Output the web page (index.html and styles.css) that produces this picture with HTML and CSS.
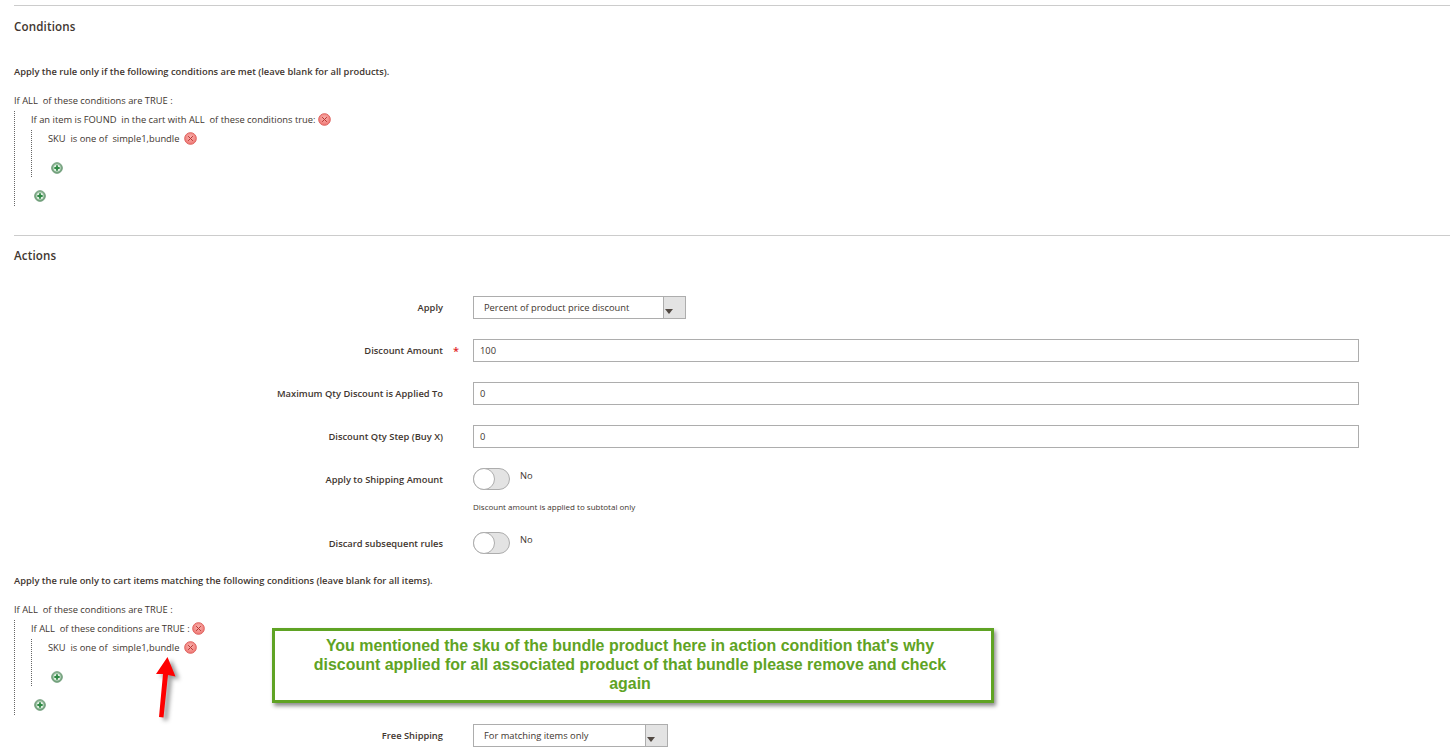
FILE: index.html
```html
<!DOCTYPE html>
<html lang="en">
<head>
<meta charset="utf-8">
<title>Cart Price Rule</title>
<link rel="stylesheet" href="styles.css">
</head>
<body>
<svg class="defs" width="0" height="0" aria-hidden="true">
  <defs>
    <radialGradient id="redg" cx="50%" cy="40%" r="60%"><stop offset="0" stop-color="#f9b4b0"/><stop offset="1" stop-color="#ef7672"/></radialGradient>
    <radialGradient id="greeng" cx="50%" cy="40%" r="60%"><stop offset="0" stop-color="#a9c9ae"/><stop offset="1" stop-color="#6d9f78"/></radialGradient>
    <symbol id="rm" viewBox="0 0 13 13"><circle cx="6.5" cy="6.5" r="5.8" fill="url(#redg)" stroke="#dd5f5b"/><path d="M4.2 4.2l4.600 4.600M8.800 4.200l-4.600 4.600" stroke="#b5322e" stroke-width="1" fill="none"/></symbol>
    <symbol id="add" viewBox="0 0 13 13"><circle cx="6.5" cy="6.5" r="5.8" fill="url(#greeng)" stroke="#6f9b78"/><circle cx="6.5" cy="6.5" r="3.8" fill="#dfeee0"/><path d="M6.5 3.6v5.8M3.6 6.5h5.8" stroke="#2f8a45" stroke-width="2" fill="none"/></symbol>
  </defs>
</svg>

<section class="section section-conditions">
  <h2 class="section-title">Conditions</h2>
  <p class="rule-intro">Apply the rule only if the following conditions are met (leave blank for all products).</p>
  <div class="tree">
    <div class="tree-line">If ALL&nbsp; of these conditions are TRUE :</div>
    <div class="branch">
      <div class="tree-line">If an item is FOUND&nbsp; in the cart with ALL&nbsp; of these conditions true: <svg class="ico ico-tight"><use href="#rm"/></svg></div>
      <div class="branch branch-inner">
        <div class="tree-line">SKU&nbsp; is one of&nbsp; simple1,bundle <svg class="ico"><use href="#rm"/></svg></div>
        <svg class="ico add add-inner"><use href="#add"/></svg>
      </div>
      <svg class="ico add add-outer"><use href="#add"/></svg>
    </div>
  </div>
</section>

<section class="section section-actions">
  <h2 class="section-title">Actions</h2>
  <div class="form">
    <div class="row row-select">
      <label class="row-label">Apply</label>
      <div class="select select-wide"><span class="select-text">Percent of product price discount</span><span class="select-btn"><i class="caret"></i></span></div>
    </div>
    <div class="row">
      <label class="row-label required">Discount Amount</label>
      <div class="input">100</div>
    </div>
    <div class="row">
      <label class="row-label">Maximum Qty Discount is Applied To</label>
      <div class="input">0</div>
    </div>
    <div class="row">
      <label class="row-label">Discount Qty Step (Buy X)</label>
      <div class="input">0</div>
    </div>
    <div class="row row-toggle">
      <label class="row-label">Apply to Shipping Amount</label>
      <div>
        <div class="toggle-wrap"><span class="toggle"><i class="knob"></i></span><span class="toggle-text">No</span></div>
        <div class="note">Discount amount is applied to subtotal only</div>
      </div>
    </div>
    <div class="row row-toggle row-discard">
      <label class="row-label">Discard subsequent rules</label>
      <div class="toggle-wrap"><span class="toggle"><i class="knob"></i></span><span class="toggle-text">No</span></div>
    </div>
  </div>
  <p class="rule-intro rule-intro-action">Apply the rule only to cart items matching the following conditions (leave blank for all items).</p>
  <div class="tree">
    <div class="tree-line">If ALL&nbsp; of these conditions are TRUE :</div>
    <div class="branch">
      <div class="tree-line">If ALL&nbsp; of these conditions are TRUE : <svg class="ico ico-tight"><use href="#rm"/></svg></div>
      <div class="branch branch-inner">
        <div class="tree-line">SKU&nbsp; is one of&nbsp; simple1,bundle <svg class="ico"><use href="#rm"/></svg></div>
        <svg class="ico add add-inner"><use href="#add"/></svg>
      </div>
      <svg class="ico add add-outer"><use href="#add"/></svg>
    </div>
  </div>
  <div class="row row-select row-free">
    <label class="row-label">Free Shipping</label>
    <div class="select select-narrow"><span class="select-text">For matching items only</span><span class="select-btn"><i class="caret"></i></span></div>
  </div>
</section>

<div class="callout">You mentioned the sku of the bundle product here in action condition that's why discount applied for all associated product of that bundle please remove and check again</div>
<svg class="arrow" width="40" height="70" viewBox="0 0 40 70" aria-hidden="true"><path d="M17.500 1L25.500 20.500L18 19L13.500 61.500L9 61L13 18L6 18Z" fill="#fe0000"/></svg>
</body>
</html>
```
FILE: styles.css
```css
* { box-sizing: border-box; }
html, body { margin: 0; padding: 0; }
body {
  width: 1450px;
  height: 754px;
  overflow: hidden;
  position: relative;
  background: #fff;
  font-family: "Open Sans", "Noto Sans", sans-serif;
  font-size: 9.35px;
  line-height: 14px;
  color: #41362f;
}
.defs { position: absolute; }
.section { border-top: 1px solid #cccccc; margin-left: 14px; }
.section-conditions { margin-top: 5px; height: 230px; }
.section-title {
  margin: 13px 0 0;
  font-size: 11.6px;
  line-height: 15px;
  font-weight: 600;
  letter-spacing: .15px;
  color: #41362f;
}
.section-actions .section-title { margin-top: 12px; }
.rule-intro { margin: 31px 0 0; font-weight: 600; line-height: 14px; }
.tree { margin-top: 15px; }
.tree-line { height: 19px; line-height: 14px; white-space: nowrap; }
.branch {
  border-left: 1px dotted #666;
  margin-top: -2px;
  padding-top: 2px;
  padding-left: 16px;
  height: 95px;
  position: relative;
}
.branch-inner { height: 47px; }
.ico { width: 13px; height: 13px; vertical-align: -3px; margin-left: 2px; }
.ico-tight { margin-left: 0; }
.add { display: block; margin: 0; position: absolute; left: 19px; width: 12px; height: 12px; }
.add-inner { top: 32px; }
.add-outer { top: 79px; }
.form { margin-left: -14px; margin-top: 33px; }
.row { display: flex; height: 23px; margin-bottom: 20px; }
.row-label {
  width: 443px;
  flex: none;
  text-align: right;
  font-weight: 600;
  line-height: 23px;
  position: relative;
}
.required::after {
  content: "*";
  position: absolute;
  left: 453px;
  top: 0;
  color: #e22626;
  font-size: 11px;
}
.select, .input {
  margin-left: 30px;
  height: 23px;
  background: #fff;
  border: 1px solid #adadad;
  line-height: 21px;
}
.input { width: 886px; padding-left: 6px; }
.select { display: flex; padding-left: 10px; }
.select-text { flex: 1; }
.select-btn {
  width: 22px;
  background: #e3e3e3;
  border-left: 1px solid #adadad;
  position: relative;
}
.caret {
  position: absolute;
  left: 1px;
  top: 12px;
  border-left: 4px solid transparent;
  border-right: 4px solid transparent;
  border-top: 5px solid #514943;
}
.select-wide { width: 213px; }
.select-narrow { width: 195px; }
.row-toggle { margin-bottom: 0; height: 64px; }
.row-discard { height: 42px; }
.toggle-wrap { display: flex; margin-left: 30px; }
.toggle {
  display: block;
  width: 37px;
  height: 22px;
  border-radius: 11px;
  background: #e3e3e3;
  border: 1px solid #adadad;
  position: relative;
}
.knob {
  position: absolute;
  left: -1px;
  top: -1px;
  width: 22px;
  height: 22px;
  border-radius: 50%;
  background: #fff;
  border: 1px solid #adadad;
}
.toggle-text { margin: 1px 0 0 10px; line-height: 14px; }
.note { margin: 10px 0 0 30px; font-size: 8px; line-height: 14px; }
.rule-intro-action { margin-top: 0; }
.row-free { margin: 9px 0 0 -14px; }
.callout {
  position: absolute;
  left: 272px;
  top: 628px;
  width: 722px;
  height: 75px;
  border: 3px solid #5fa324;
  background: #fff;
  box-shadow: 2px 3px 4px rgba(0,0,0,.45);
  color: #5fa324;
  font-family: "Liberation Sans", Arial, sans-serif;
  font-weight: 700;
  font-size: 15.95px;
  line-height: 19px;
  text-align: center;
  padding: 5px 31px 0 25px;
}
.arrow {
  position: absolute;
  left: 150px;
  top: 656px;
  filter: drop-shadow(4px 3px 2px rgba(0,0,0,.4));
}
```
